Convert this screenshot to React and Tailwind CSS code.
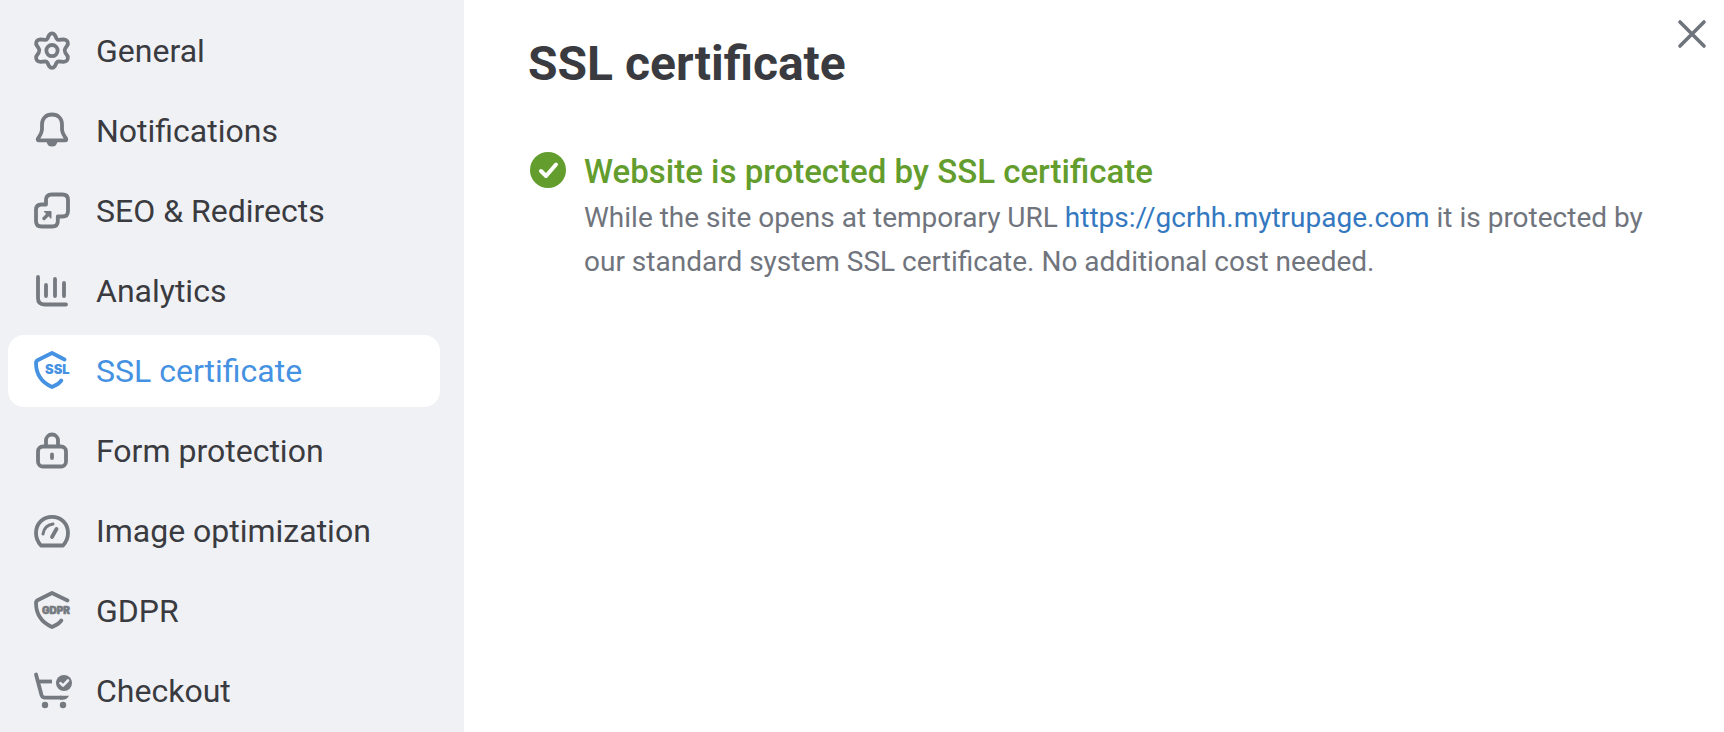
const items = [
    { label: "General", icon: GearIcon },
    { label: "Notifications", icon: BellIcon },
    { label: "SEO & Redirects", icon: RedirectIcon },
    { label: "Analytics", icon: ChartIcon },
    { label: "SSL certificate", icon: SslIcon, active: true },
    { label: "Form protection", icon: LockIcon },
    { label: "Image optimization", icon: GaugeIcon },
    { label: "GDPR", icon: GdprIcon },
    { label: "Checkout", icon: CartIcon },
];

function Icon({ children }) {
    return (
        <svg
            viewBox="0 0 40 40"
            className="size-10 shrink-0"
            fill="none"
            stroke="currentColor"
            strokeWidth="3.8"
            strokeLinecap="round"
            strokeLinejoin="round"
            aria-hidden="true"
        >
            {children}
        </svg>
    );
}

function GearIcon() {
    return (
        <Icon>
            <path d="M17 4.2Q20 .6 23 4.2L24.6 7.6Q25.4 9 27 8.8L31.5 8.3Q36.5 9 35.8 13.5L33.2 17.6Q32 19.5 33.2 21.4L35.8 25.5Q36.5 30.5 31.5 30.8L27 30.3Q25.4 30.2 24.6 31.6L23 35Q20 38.8 17 35L15.4 31.6Q14.6 30.2 13 30.3L8.5 30.8Q3.5 30.5 4.2 25.5L6.8 21.4Q8 19.5 6.8 17.6L4.2 13.5Q3.5 9 8.5 8.3L13 8.8Q14.6 9 15.4 7.6Z" />
            <circle cx="20" cy="19.6" r="5.6" />
        </Icon>
    );
}

function BellIcon() {
    return (
        <Icon>
            <path d="M10 13.5C10 7.5 14 3.5 20 3.5S30 7.5 30 13.5V18C30 22 31.5 24 34 27.3Q35 29.3 33 29.3H7Q5 29.3 6 27.3C8.5 24 10 22 10 18Z" />
            <path d="M14.5 30H25.5Q25 35.5 20 35.5T14.5 30Z" fill="currentColor" stroke="none" />
        </Icon>
    );
}

function RedirectIcon() {
    return (
        <Icon>
            <path d="M14 12.7V9Q14 3.5 19.5 3.5H30.5Q36 3.5 36 9V20Q36 25.5 30.5 25.5H25.8V30Q25.8 35.5 20.3 35.5H9.5Q4 35.5 4 30V19Q4 13.5 9.5 13.5H14Z" />
            <path d="M12 27.5L17 22.5" strokeWidth="3.4" />
            <path d="M12.5 20.5H19V27Z" fill="currentColor" strokeWidth="1" />
        </Icon>
    );
}

function ChartIcon() {
    return (
        <Icon>
            <path d="M6 6V27Q6 33.5 12.5 33.5H34M14 14V25M23 8V25M32 12V25" />
        </Icon>
    );
}

function SslIcon() {
    return (
        <Icon>
            <path d="M32.5 8.5L20 2L6 9Q4 10 4 12C4 23 10 31.5 20 36Q26.5 33.3 29.3 29.5" />
            <text
                x="13"
                y="23"
                className="font-[Inter,sans-serif] text-[13px] font-black"
                fill="currentColor"
                stroke="none"
            >
                SSL
            </text>
        </Icon>
    );
}

function LockIcon() {
    return (
        <Icon>
            <rect x="6" y="15.5" width="28" height="20" rx="5" />
            <path d="M14 15V9.5A6 6 0 0 1 26 9.5V15M20 23.5V27" />
        </Icon>
    );
}

function GaugeIcon() {
    return (
        <Icon>
            <path d="M9 34.500C5.800 31 4 27 4 22C4 12.500 11 5.800 20 5.800S36 12.500 36 22C36 27 34.200 31 31 34.500Z" />
            <path d="M11 23Q12.300 14.200 21 13" strokeWidth="3" />
            <path d="M20 26L24.500 18" />
        </Icon>
    );
}

function GdprIcon() {
    return (
        <Icon>
            <path d="M35.5 9.5L20 2L6 9Q4 10 4 12C4 23 10 31.5 20 36Q26.5 33.3 29.3 29.5" />
            <text
                x="10"
                y="23"
                className="font-[Inter,sans-serif] text-[10px] font-black"
                fill="currentColor"
                strokeWidth="0.6"
            >
                GDPR
            </text>
        </Icon>
    );
}

function CartIcon() {
    return (
        <Icon>
            <path d="M4 3.5L9.5 24Q10.3 26.7 13 26.7H29" />
            <path d="M28 24.7H37Q35 28.7 30.5 28.7H28Z" fill="currentColor" stroke="none" />
            <path d="M7 10.5H20" strokeLinecap="butt" />
            <g fill="currentColor" stroke="none">
                <circle cx="13" cy="34" r="3.2" />
                <circle cx="31" cy="34" r="3.2" />
                <circle cx="32" cy="12" r="8" />
            </g>
            <path d="M28.5 12.2L31 14.7L36 9.5" className="stroke-[#f0f1f5]" strokeWidth="2.6" />
        </Icon>
    );
}

export default function App() {
    return (
        <div className="flex h-screen overflow-hidden bg-white font-[Roboto,sans-serif] text-[#3a3b40]">
            <nav className="w-[464px] shrink-0 bg-[#f0f1f5] py-[15px] pr-6 pl-2">
                <ul className="space-y-2">
                    {items.map(({ label, icon: ItemIcon, active }) => (
                        <li key={label}>
                            <button
                                type="button"
                                aria-current={active ? "page" : undefined}
                                className={
                                    active
                                        ? "flex h-[72px] w-full items-center gap-6 rounded-2xl bg-white px-6 text-left text-[32px] text-[#4591e2]"
                                        : "flex h-[72px] w-full items-center gap-6 rounded-2xl px-6 text-left text-[32px]"
                                }
                            >
                                <span className={active ? "text-[#4591e2]" : "text-[#757980]"}>
                                    <ItemIcon />
                                </span>
                                {label}
                            </button>
                        </li>
                    ))}
                </ul>
            </nav>

            <main className="relative min-w-0 flex-1 px-16 pt-[34px]">
                <button type="button" aria-label="Close" className="absolute top-[18px] right-4 text-[#6f737b]">
                    <svg
                        viewBox="0 0 32 32"
                        className="size-8"
                        stroke="currentColor"
                        strokeWidth="3.6"
                        strokeLinecap="round"
                        aria-hidden="true"
                    >
                        <path d="M4 4L28 28M28 4L4 28" />
                    </svg>
                </button>

                <h1 className="mb-14 text-[48px] leading-[60px] font-bold">SSL certificate</h1>

                <div className="flex gap-4">
                    <svg viewBox="0 0 40 40" className="size-10 shrink-0" fill="none" aria-hidden="true">
                        <circle cx="20" cy="20" r="18" className="fill-[#639d2d]" />
                        <path
                            d="M13 21L18 26L28 14.5"
                            stroke="white"
                            strokeWidth="4"
                            strokeLinecap="round"
                            strokeLinejoin="round"
                        />
                    </svg>
                    <div>
                        <h2 className="text-[33px] leading-[44px] font-medium text-[#639d2d]">
                            Website is protected by SSL certificate
                        </h2>
                        <p className="mt-[2px] text-[28px] leading-[44px] text-[#70747d]">
                            While the site opens at temporary URL{" "}
                            <a href="https://gcrhh.mytrupage.com" className="text-[#3478c0]">
                                https://gcrhh.mytrupage.com
                            </a>{" "}
                            it is protected by our standard system SSL certificate. No additional cost needed.
                        </p>
                    </div>
                </div>
            </main>
        </div>
    );
}
